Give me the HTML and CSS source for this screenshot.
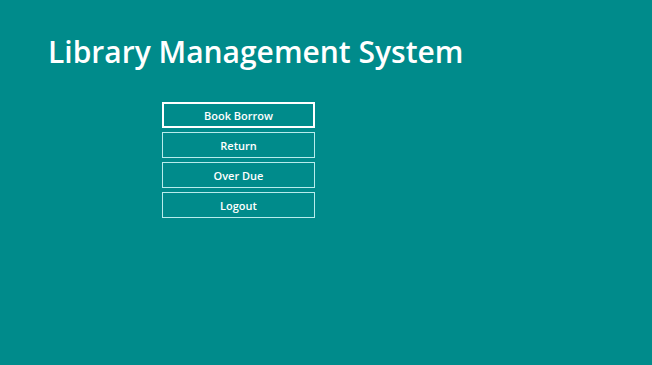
FILE: index.html
```html
<!DOCTYPE html>
<html lang="en">
<head>
    <meta charset="UTF-8">
    <meta name="viewport" content="width=device-width, initial-scale=1.0">
    <title>Library Management System</title>
    <link rel="stylesheet" href="styles.css">
</head>
<body>

    <h1 class="header">Library Management System</h1>

    <!-- Main menu -->
    <div class="menu">
        <button class="menu-button active">Book Borrow</button>
        <button class="menu-button">Return</button>
        <button class="menu-button">Over Due</button>
        <button class="menu-button">Logout</button>
    </div>

</body>
</html>
```

FILE: styles.css
```css
html, body {
    height: 100%;
}

body {
    margin: 0;
    background-color: #008b8b;
    font-family: "Open Sans", sans-serif;
    color: #fff;
}

.header {
    margin: 0;
    padding: 30px 0 0 48px;
    font-size: 30px;
    font-weight: 600;
    line-height: 44px;
}

.menu {
    display: flex;
    flex-direction: column;
    gap: 4px;
    width: 153px;
    margin: 28px 0 0 162px;
}

.menu-button {
    height: 26px;
    background: transparent;
    border: 1px solid #b8ecec;
    color: #fff;
    font-family: "Open Sans", sans-serif;
    font-size: 11px;
    font-weight: 600;
    cursor: pointer;
}

.menu-button.active {
    border: 2px solid #fff;
}
```
